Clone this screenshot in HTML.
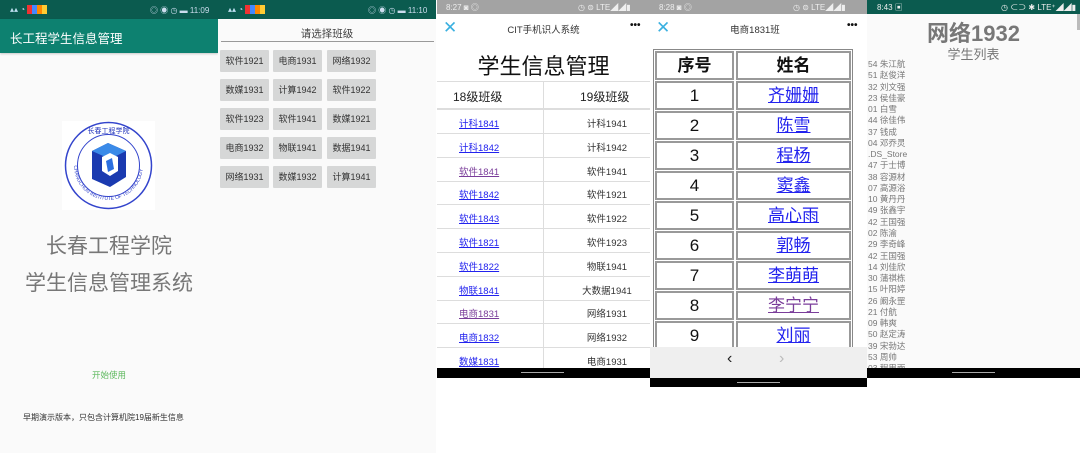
<!DOCTYPE html>
<html><head><meta charset="utf-8"><style>
*{margin:0;padding:0;box-sizing:border-box}
body{width:1080px;height:453px;background:#fff;position:relative;overflow:hidden;font-family:"Liberation Sans","Noto Sans CJK SC",sans-serif}
.a{position:absolute}
.c{text-align:center;white-space:nowrap}
.btn{position:absolute;background:#d6d7d7;width:49px;height:22px;font-size:9px;color:#333;text-align:center;line-height:22px;border-radius:1px}
.lk{color:#2222ee;text-decoration:underline}
.pu{color:#7a3d9a;text-decoration:underline}
.st{font-size:8px;color:#ddd}
</style></head><body>

<!-- Panel 1 -->
<div class="a" style="left:0;top:0;width:218px;height:453px;background:#fafafa"></div>
<div class="a" style="left:0;top:0;width:218px;height:19px;background:#0b5b4f"></div>
<div class="a st" style="left:10px;top:5px;color:#bde">▴▴ ◔ <span style="background:#e33;color:#e33">■</span><span style="background:#48f;color:#48f">■</span><span style="background:#f80;color:#f80">■</span><span style="background:#fc3;color:#fc3">■</span></div>
<div class="a st" style="left:150px;top:5px;color:#cde">◎ ◉ ◷ ▬ 11:09</div>
<div class="a" style="left:0;top:19px;width:218px;height:34px;background:#0d8170;box-shadow:0 1px 2px rgba(0,0,0,.2)"></div>
<div class="a" style="left:10px;top:28px;font-size:12.5px;color:#fff">长工程学生信息管理</div>
<div class="a" style="left:62px;top:121px;width:93px;height:89px;background:#fff">
<svg width="93" height="89" viewBox="0 0 93 89">
<defs><path id="arc" d="M12 44.5 A34.5 34.5 0 0 0 81 44.5"/></defs>
<circle cx="46.5" cy="44.5" r="43" fill="none" stroke="#3344cc" stroke-width="1.5"/>
<circle cx="46.5" cy="44.5" r="31" fill="none" stroke="#3344cc" stroke-width="1"/>
<text x="46.5" y="12" font-size="7" fill="#2233bb" text-anchor="middle">长春工程学院</text>
<text font-size="5" fill="#3344cc"><textPath href="#arc">CHANGCHUN INSTITUTE OF TECHNOLOGY</textPath></text>
<path d="M30 30 L46 22 L64 30 L64 56 L48 66 L30 58 Z" fill="#1a3ab0"/>
<path d="M30 30 L46 22 L64 30 L48 38 Z" fill="#3a8ae8"/>
<path d="M40 36 L48 32 L56 36 L56 50 L48 55 L40 50 Z" fill="#fff"/>
<path d="M44 40 L50 37 L52 48 L46 51 Z" fill="#2b6fe0"/>
</svg></div>
<div class="a c" style="left:0;width:218px;top:230px;font-size:21px;color:#777">长春工程学院</div>
<div class="a c" style="left:0;width:218px;top:267px;font-size:21px;color:#777">学生信息管理系统</div>
<div class="a c" style="left:0;width:218px;top:369px;font-size:8.5px;color:#5cb85c">开始使用</div>
<div class="a" style="left:23px;top:412px;font-size:8px;color:#333">早期演示版本，只包含计算机院19届新生信息</div>

<!-- Panel 2 -->
<div class="a" style="left:218px;top:0;width:218px;height:453px;background:#fafafa"></div>
<div class="a" style="left:218px;top:0;width:218px;height:19px;background:#0b5b4f"></div>
<div class="a st" style="left:228px;top:5px;color:#bde">▴▴ ◔ <span style="background:#e33;color:#e33">■</span><span style="background:#48f;color:#48f">■</span><span style="background:#f80;color:#f80">■</span><span style="background:#fc3;color:#fc3">■</span></div>
<div class="a st" style="left:368px;top:5px;color:#cde">◎ ◉ ◷ ▬ 11:10</div>
<div class="a c" style="left:218px;width:218px;top:26px;font-size:10.5px;color:#444">请选择班级</div>
<div class="a" style="left:221px;top:41px;width:213px;height:1px;background:#999"></div>
<div class="btn" style="left:220px;top:50px">软件1921</div><div class="btn" style="left:273px;top:50px">电商1931</div><div class="btn" style="left:327px;top:50px">网络1932</div>
<div class="btn" style="left:220px;top:79px">数媒1931</div><div class="btn" style="left:273px;top:79px">计算1942</div><div class="btn" style="left:327px;top:79px">软件1922</div>
<div class="btn" style="left:220px;top:108px">软件1923</div><div class="btn" style="left:273px;top:108px">软件1941</div><div class="btn" style="left:327px;top:108px">数媒1921</div>
<div class="btn" style="left:220px;top:137px">电商1932</div><div class="btn" style="left:273px;top:137px">物联1941</div><div class="btn" style="left:327px;top:137px">数据1941</div>
<div class="btn" style="left:220px;top:166px">网络1931</div><div class="btn" style="left:273px;top:166px">数媒1932</div><div class="btn" style="left:327px;top:166px">计算1941</div>

<!-- Panel 3 -->
<div class="a" style="left:437px;top:0;width:213px;height:378px;background:#fff"></div>
<div class="a" style="left:437px;top:0;width:213px;height:14px;background:#a3a3a3"></div>
<div class="a st" style="left:446px;top:2px;color:#eee">8:27 ◙ ◎</div>
<div class="a st" style="left:578px;top:2px;color:#eee">◷ ⊜ LTE◢◢▮</div>
<div class="a" style="left:443px;top:18px;font-size:17px;color:#3ab0e0;line-height:20px">✕</div>
<div class="a c" style="left:437px;width:213px;top:22px;font-size:9.5px;color:#333">CIT手机识人系统</div>
<div class="a" style="left:630px;top:20px;font-size:10px;color:#111;font-weight:bold">•••</div>
<div class="a c" style="left:437px;width:213px;top:49px;font-size:22px;color:#111">学生信息管理</div>
<div class="a" style="left:437px;top:81px;width:213px;height:1px;background:#ddd"></div>
<div class="a" style="left:437px;top:108px;width:213px;height:2px;background:#ddd"></div>
<div class="a" style="left:543px;top:82px;width:1px;height:286px;background:#ddd"></div>
<div class="a" style="left:453px;top:88px;font-size:12px;color:#222">18级班级</div>
<div class="a" style="left:580px;top:88px;font-size:12px;color:#222">19级班级</div>
<div id="p3"></div>
<div class="a" style="left:437px;top:368px;width:213px;height:10px;background:#000"></div>
<div class="a" style="left:521px;top:372px;width:43px;height:1px;background:#aaa"></div>

<!-- Panel 4 -->
<div class="a" style="left:650px;top:0;width:217px;height:387px;background:#fff"></div>
<div class="a" style="left:650px;top:0;width:217px;height:14px;background:#a3a3a3"></div>
<div class="a st" style="left:659px;top:2px;color:#eee">8:28 ◙ ◎</div>
<div class="a st" style="left:793px;top:2px;color:#eee">◷ ⊜ LTE◢◢▮</div>
<div class="a" style="left:656px;top:18px;font-size:17px;color:#3ab0e0;line-height:20px">✕</div>
<div class="a c" style="left:650px;width:210px;top:22px;font-size:9.5px;color:#333">电商1831班</div>
<div class="a" style="left:847px;top:20px;font-size:10px;color:#111;font-weight:bold">•••</div>
<div class="a" style="left:653px;top:49px;width:200px;height:300px;border:1px solid #888;border-bottom:none"></div>
<div id="p4"></div>
<div class="a" style="left:650px;top:347px;width:217px;height:31px;background:#efefef"></div>
<div class="a" style="left:727px;top:350px;font-size:16px;color:#222">‹</div>
<div class="a" style="left:779px;top:350px;font-size:16px;color:#bbb">›</div>
<div class="a" style="left:650px;top:378px;width:217px;height:9px;background:#000"></div>
<div class="a" style="left:737px;top:382px;width:43px;height:1px;background:#aaa"></div>

<!-- Panel 5 -->
<div class="a" style="left:867px;top:0;width:213px;height:378px;background:#fafafa"></div>
<div class="a" style="left:867px;top:0;width:213px;height:14px;background:#0b5b4f"></div>
<div class="a st" style="left:877px;top:2px;color:#eee">8:43 ▣</div>
<div class="a st" style="left:1001px;top:2px;color:#eee">◷ ⊂⊃ ✱ LTE⁺◢◢▮</div>
<div class="a" style="left:1077px;top:14px;width:3px;height:16px;background:#bbb"></div>
<div class="a c" style="left:867px;width:213px;top:16px;font-size:22px;font-weight:bold;color:#777">网络1932</div>
<div class="a c" style="left:867px;width:213px;top:44px;font-size:13px;color:#777">学生列表</div>
<div id="p5" class="a" style="left:868px;top:59px;font-size:8.5px;line-height:11.27px;color:#777;width:100px;height:309px;overflow:hidden"></div>
<div class="a" style="left:867px;top:368px;width:213px;height:10px;background:#000"></div>
<div class="a" style="left:952px;top:372px;width:43px;height:1px;background:#aaa"></div>

<script>
var a=[["计科1841","计科1941",0],["计科1842","计科1942",0],["软件1841","软件1941",1],["软件1842","软件1921",0],["软件1843","软件1922",0],["软件1821","软件1923",0],["软件1822","物联1941",0],["物联1841","大数据1941",0],["电商1831","网络1931",1],["电商1832","网络1932",0],["数媒1831","电商1931",0]];
var h="";
a.forEach(function(r,i){var y=110+i*23.8;
h+='<div class="a" style="left:437px;top:'+(y+23)+'px;width:213px;height:1px;background:#ddd"></div>';
h+='<div class="a" style="left:459px;top:'+(y+6)+'px;font-size:9.5px;white-space:nowrap"><span class="'+(r[2]?'pu':'lk')+'">'+r[0]+'</span></div>';
h+='<div class="a c" style="left:544px;width:126px;top:'+(y+6)+'px;font-size:9.5px;color:#333">'+r[1]+'</div>';});
document.getElementById('p3').outerHTML=h;
var n=[["序号","姓名",2],["1","齐姗姗",0],["2","陈雪",0],["3","程杨",0],["4","窦鑫",0],["5","高心雨",0],["6","郭畅",0],["7","李萌萌",0],["8","李宁宁",1],["9","刘丽",0]];
h="";
n.forEach(function(r,i){var y=51+i*30;var s=r[2]==2?'font-weight:bold;color:#111':'';
h+='<div class="a c" style="left:655px;top:'+y+'px;width:79px;height:29px;border:2px solid #999;font-size:17px;line-height:25px;color:#111;'+s+'">'+r[0]+'</div>';
h+='<div class="a c" style="left:736px;top:'+y+'px;width:115px;height:29px;border:2px solid #999;font-size:17px;line-height:25px;'+s+'">'+(r[2]==2?r[1]:'<span class="'+(r[2]?'pu':'lk')+'">'+r[1]+'</span>')+'</div>';});
document.getElementById('p4').outerHTML=h;
var l="54 朱江航,51 赵俊洋,32 刘文强,23 侯佳豪,01 白雪,44 徐佳伟,37 钱成,04 邓乔灵,.DS_Store,47 于士博,38 容源材,07 高源浴,10 黄丹丹,49 张鑫宇,42 王国强,02 陈渝,29 李奇峰,42 王国强,14 刘佳欣,30 蒲祺栋,15 叶阳婷,26 阚永罡,21 付航,09 韩爽,50 赵定涛,39 宋勃达,53 周帅,03 程思雨".split(",");
document.getElementById('p5').innerHTML=l.map(function(x){return '<div>'+x+'</div>'}).join('');
</script>
</body></html>
